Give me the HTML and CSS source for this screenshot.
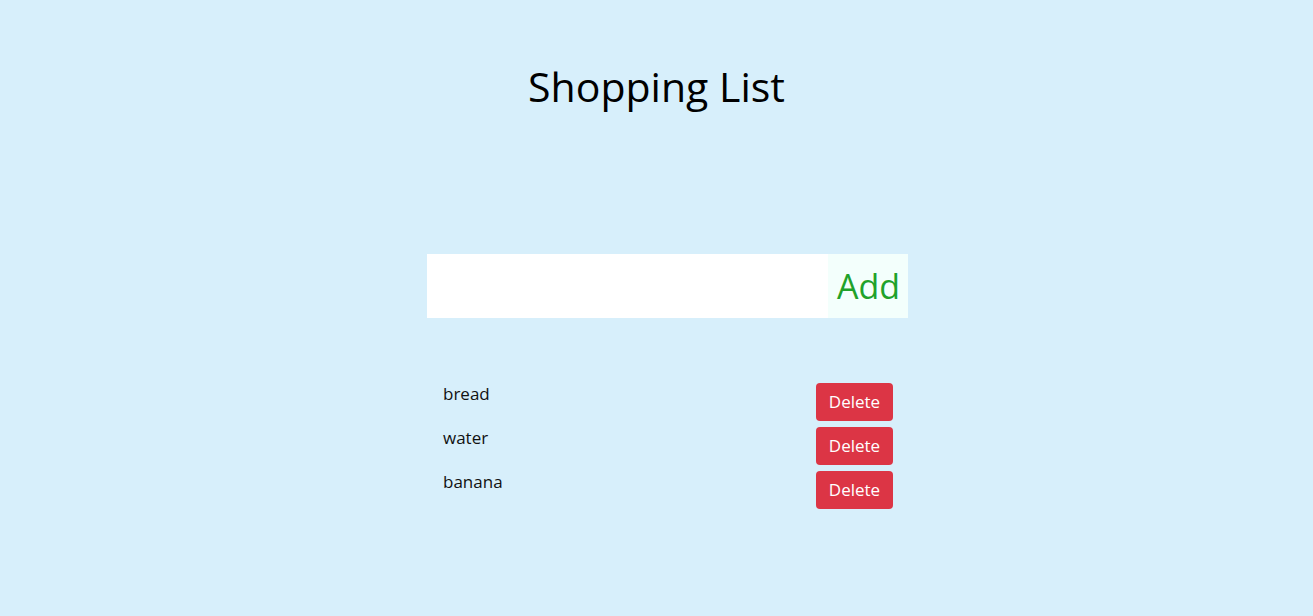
FILE: index.html
```html
<!DOCTYPE html>
<html>
<head>
<meta charset="utf-8">
<link rel="stylesheet" href="styles.css">
<title>Shopping List</title>
</head>
<body>
<main class="app">
  <h1 class="title">Shopping List</h1>
  <section class="panel">
    <form class="add-form">
      <input class="add-input" type="text">
      <button class="add-btn" type="button">Add</button>
    </form>
    <ul class="items">
      <li class="item"><span class="item-name">bread</span><button class="del-btn" type="button">Delete</button></li>
      <li class="item"><span class="item-name">water</span><button class="del-btn" type="button">Delete</button></li>
      <li class="item"><span class="item-name">banana</span><button class="del-btn" type="button">Delete</button></li>
    </ul>
  </section>
</main>
</body>
</html>
```
FILE: styles.css
```css
html, body {
  margin: 0;
  padding: 0;
}
body {
  background: #d7effb;
  font-family: "Open Sans", "Noto Sans", sans-serif;
  color: #111;
  min-height: 616px;
}
.app {
  width: 503px;
  margin: 0 auto;
  padding-top: 58px;
  display: flex;
  flex-direction: column;
}
.title {
  margin: 0 -200px;
  text-align: center;
  font-weight: 400;
  font-size: 41px;
  line-height: 56px;
  color: #000;
}
.panel {
  padding-left: 22px;
  margin-top: 140px;
}
.add-form {
  display: flex;
  height: 64px;
}
.add-input {
  flex: 1;
  border: none;
  outline: none;
  background: #fff;
  margin: 0;
  padding: 0 12px;
  font: inherit;
}
.add-btn {
  width: 80px;
  border: none;
  margin: 0;
  padding: 0 8px 0 0;
  background: #f3fffc;
  color: #1fa22a;
  font-family: inherit;
  font-size: 34px;
  text-align: right;
}
.items {
  list-style: none;
  margin: 65px 0 0;
  padding: 0 15px 0 16px;
  display: flex;
  flex-direction: column;
  gap: 6px;
}
.item {
  display: flex;
  justify-content: space-between;
  align-items: flex-start;
}
.item-name {
  font-size: 17px;
  line-height: 21px;
  color: #111;
}
.del-btn {
  width: 77px;
  height: 38px;
  border: none;
  border-radius: 4px;
  background: #dc3545;
  color: #fff;
  font-family: inherit;
  font-size: 17px;
  padding: 0 0 2px;
}
```
